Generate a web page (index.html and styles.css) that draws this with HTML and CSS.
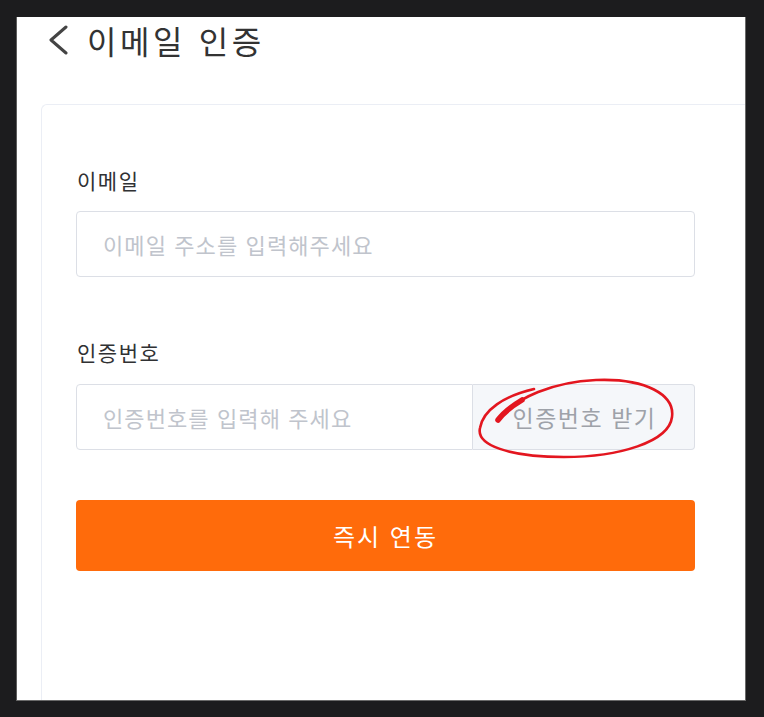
FILE: index.html
```html
<!DOCTYPE html>
<html lang="ko">
<head>
<meta charset="utf-8">
<title>이메일 인증</title>
<link rel="stylesheet" href="styles.css">
</head>
<body>
<div class="screen">
  <header class="header">
    <svg class="back" width="20" height="32" viewBox="0 0 20 32" aria-hidden="true">
      <polyline points="17,3 2,16 17,29" fill="none" stroke="#444" stroke-width="3" stroke-linecap="round" stroke-linejoin="round"/>
    </svg>
    <h1 class="title">이메일 인증</h1>
  </header>
  <section class="card">
    <div class="form">
      <label class="label">이메일</label>
      <div class="input">
        <span class="placeholder">이메일 주소를 입력해주세요</span>
      </div>
      <label class="label label-code">인증번호</label>
      <div class="input-group">
        <div class="input input-left">
          <span class="placeholder">인증번호를 입력해 주세요</span>
        </div>
        <div class="append">인증번호 받기</div>
        <svg class="mark" width="220" height="100" viewBox="0 0 220 100" aria-hidden="true">
          <path d="M 30 36 C 45 18, 80 2, 124 0 C 174 -2, 203 15, 200 37 C 197 62, 147 77, 92 77 C 37 77, 4 65, 8 48 C 11 30, 32 16, 62 9" fill="none" stroke="#e3161f" stroke-width="2.6" stroke-linecap="round"/>
          <path d="M 26 40 C 32 32, 40 26, 50 20" fill="none" stroke="#e3161f" stroke-width="5.5" stroke-linecap="round"/>
        </svg>
      </div>
      <button class="submit" type="button">즉시 연동</button>
    </div>
  </section>
</div>
</body>
</html>
```
FILE: styles.css
```css
html, body {
  margin: 0;
  padding: 0;
}
body {
  background: #1c1c1e;
  padding: 17px 18px 16px 16px;
  font-family: "Noto Sans CJK KR", "Noto Sans", sans-serif;
  box-sizing: border-box;
  height: 717px;
  overflow: hidden;
}
.screen {
  background: #ffffff;
  height: 684px;
  box-sizing: border-box;
  border-left: 1px solid #5c5c5c;
  border-right: 1px solid #6a6a6a;
  border-bottom: 1px solid #6a6a6a;
  display: flex;
  flex-direction: column;
}
.header {
  display: flex;
  align-items: center;
  height: 46px;
  padding-left: 32px;
  flex: none;
}
.back {
  flex: none;
  margin-right: 18px;
}
.title {
  margin: 0;
  font-size: 32px;
  font-weight: 400;
  color: #333333;
  line-height: 46px;
  letter-spacing: 3.6px;
}
.card {
  flex: 1;
  margin-top: 41px;
  margin-left: 24px;
  border-top: 1px solid #ebeef5;
  border-left: 1px solid #ebeef5;
  border-radius: 6px 0 0 0;
  box-sizing: border-box;
  padding: 60px 0 0 34px;
}
.form {
  width: 619px;
  display: flex;
  flex-direction: column;
}
.label {
  font-size: 21px;
  line-height: 30px;
  color: #303133;
  margin-bottom: 16px;
  padding-left: 1px;
  letter-spacing: 1.5px;
}
.label-code {
  margin-top: 60px;
  margin-bottom: 17px;
}
.input {
  height: 66px;
  box-sizing: border-box;
  border: 1px solid #dcdfe6;
  border-radius: 4px;
  display: flex;
  align-items: center;
  padding-left: 26px;
}
.placeholder {
  font-size: 22px;
  color: #c0c4cc;
  letter-spacing: 1.1px;
}
.input-group {
  position: relative;
  display: flex;
  height: 66px;
}
.input-left {
  width: 397px;
  border-radius: 4px 0 0 4px;
}
.append {
  flex: 1;
  box-sizing: border-box;
  border: 1px solid #dcdfe6;
  border-left: 0;
  border-radius: 0 4px 4px 0;
  background: #f5f7fa;
  color: #9ea2a9;
  font-size: 23px;
  display: flex;
  align-items: center;
  justify-content: center;
  letter-spacing: 1.5px;
  padding-left: 2px;
}
.mark {
  position: absolute;
  left: 396px;
  top: -4px;
  overflow: visible;
  pointer-events: none;
}
.submit {
  margin-top: 50px;
  height: 71px;
  border: 0;
  border-radius: 4px;
  background: #ff6b0b;
  color: #ffffff;
  font-family: inherit;
  font-size: 24px;
  letter-spacing: 2px;
  padding: 0;
}
```
